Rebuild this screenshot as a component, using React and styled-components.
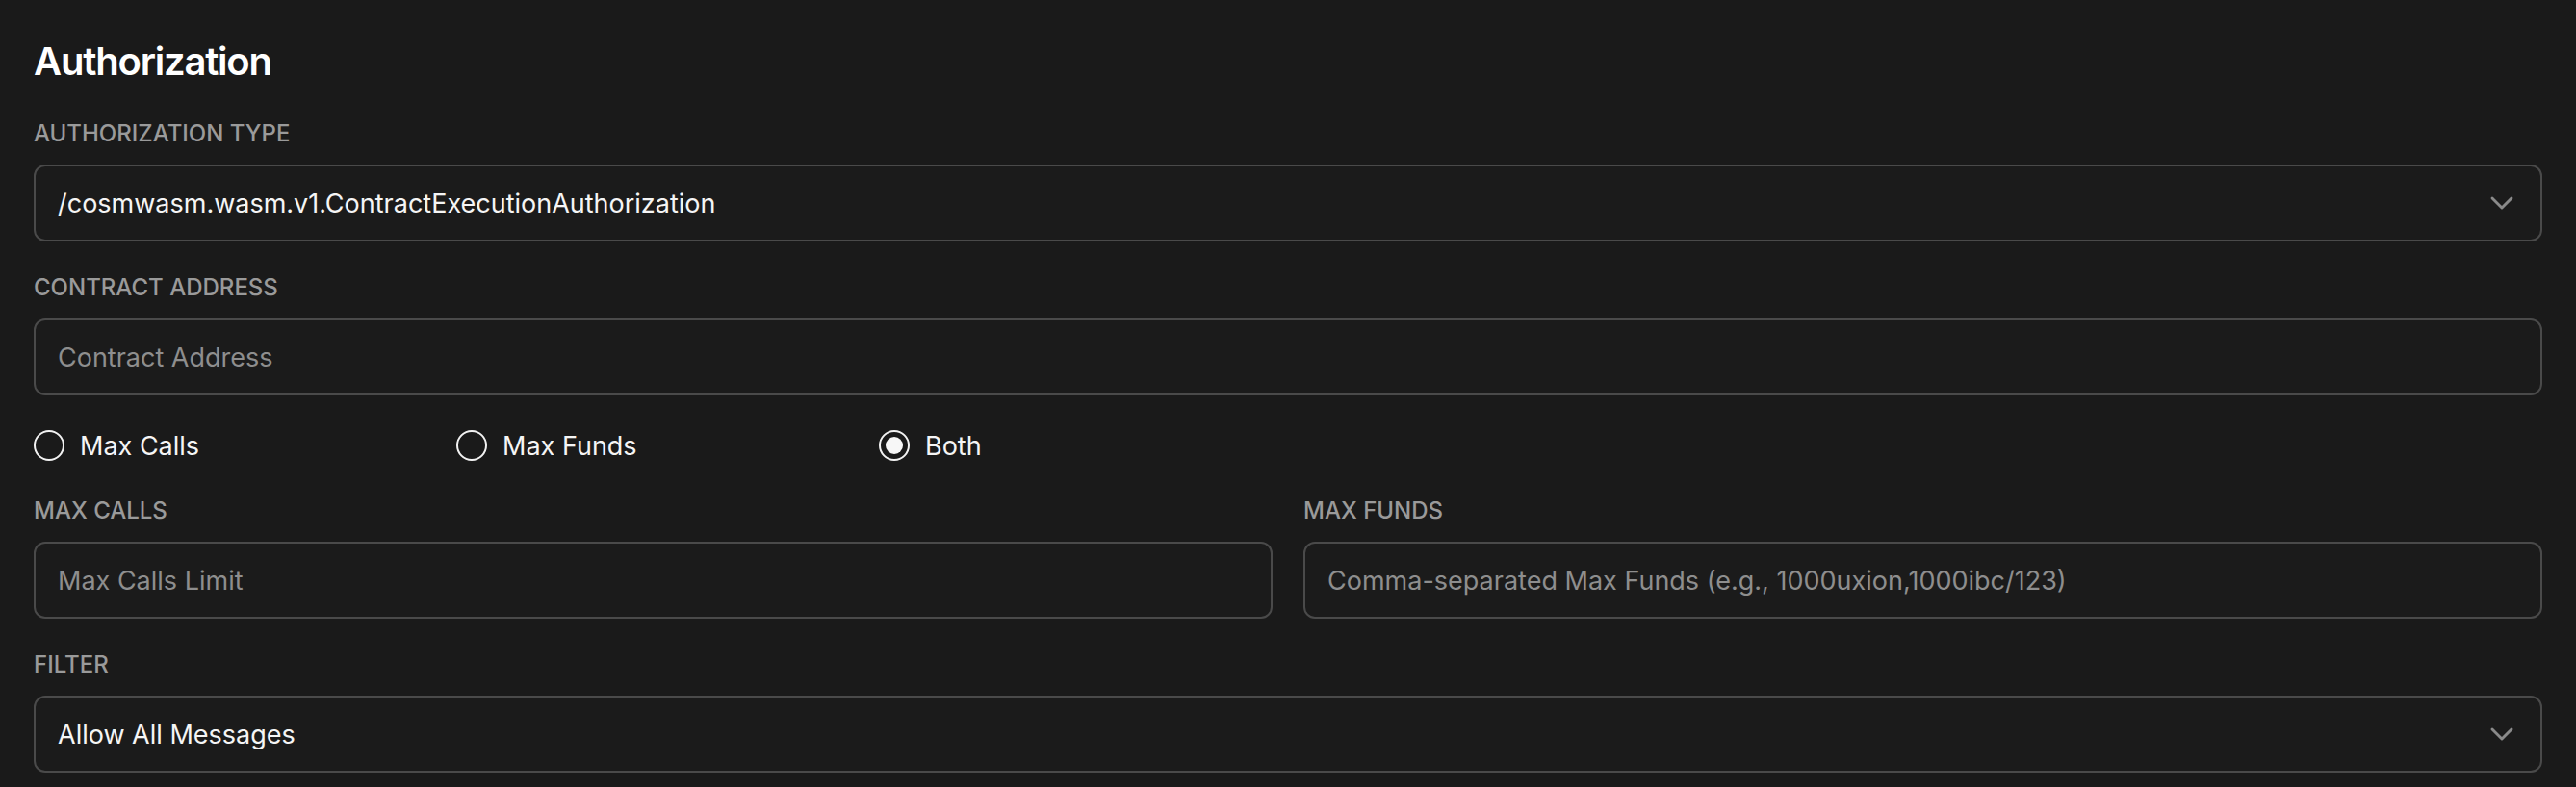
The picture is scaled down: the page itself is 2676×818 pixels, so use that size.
import React from 'react';
import styled, { createGlobalStyle } from 'styled-components';
import { ChevronDown } from 'lucide-react';


const GlobalStyle = createGlobalStyle`
  html, body {
    margin: 0;
    padding: 0;
    background: #1a1a1a;
  }

  body {
    font-family: Inter, "Noto Sans", "Liberation Sans", sans-serif;
    color: #f5f5f5;
  }
`;


const Page = styled.main`
  display: flex;
  flex-direction: column;
  gap: 32px;
  padding: 37px 35px 40px 35px;
  background: #1a1a1a;
  min-height: 818px;
  box-sizing: border-box;
`;


const Title = styled.h2`
  margin: 0;
  font-size: 40px;
  line-height: 54px;
  font-weight: 600;
  letter-spacing: -1.2px;
  color: #ffffff;
`;


const Field = styled.div`
  display: flex;
  flex-direction: column;
  gap: 16px;
  min-width: 0;
`;


const Label = styled.label`
  font-size: 24px;
  line-height: 32px;
  font-weight: 500;
  text-transform: uppercase;
  color: #9a9a9a;
`;


const Box = styled.div`
  display: flex;
  align-items: center;
  justify-content: space-between;
  height: 80px;
  box-sizing: border-box;
  padding: 0 20px 0 23px;
  border: 2px solid #4a4a4a;
  border-radius: 12px;
  background: #1b1b1b;
  font-size: 27px;
  color: ${({ $placeholder }) => ($placeholder ? '#8e8e8e' : '#f5f5f5')};
`;


const Chevron = styled(ChevronDown)`
  flex-shrink: 0;
  color: #8a8a8a;
`;


const RadioRow = styled.div`
  display: grid;
  grid-template-columns: repeat(3, 439px);
  height: 40px;
  align-items: center;
`;


const RadioOption = styled.label`
  display: flex;
  align-items: center;
  gap: 16px;
  font-size: 27px;
  color: #f5f5f5;
`;


const RadioMark = styled.span`
  width: 32px;
  height: 32px;
  box-sizing: border-box;
  border-radius: 50%;
  border: 2px solid #f2f2f2;
  display: flex;
  align-items: center;
  justify-content: center;

  &::after {
    content: '';
    width: 18px;
    height: 18px;
    border-radius: 50%;
    background: ${({ $checked }) => ($checked ? '#f7f7f7' : 'transparent')};
  }
`;


const TwoCols = styled.div`
  display: grid;
  grid-template-columns: 1fr 1fr;
  gap: 32px;
`;


const Select = ({ value }) => (
  <Box>
    <span>{value}</span>
    <Chevron size={40} strokeWidth={1.7} />
  </Box>
);


const Input = ({ placeholder }) => <Box $placeholder>{placeholder}</Box>;


const options = ['Max Calls', 'Max Funds', 'Both'];


const App = () => (
  <>
    <GlobalStyle />
    <Page>
      <Title>Authorization</Title>

      <Field>
        <Label>Authorization Type</Label>
        <Select value="/cosmwasm.wasm.v1.ContractExecutionAuthorization" />
      </Field>

      <Field>
        <Label>Contract Address</Label>
        <Input placeholder="Contract Address" />
      </Field>

      <RadioRow>
        {options.map((opt) => (
          <RadioOption key={opt}>
            <RadioMark $checked={opt === 'Both'} />
            {opt}
          </RadioOption>
        ))}
      </RadioRow>

      <TwoCols>
        <Field>
          <Label>Max Calls</Label>
          <Input placeholder="Max Calls Limit" />
        </Field>
        <Field>
          <Label>Max Funds</Label>
          <Input placeholder="Comma-separated Max Funds (e.g., 1000uxion,1000ibc/123)" />
        </Field>
      </TwoCols>

      <Field>
        <Label>Filter</Label>
        <Select value="Allow All Messages" />
      </Field>
    </Page>
  </>
);


export default App;
